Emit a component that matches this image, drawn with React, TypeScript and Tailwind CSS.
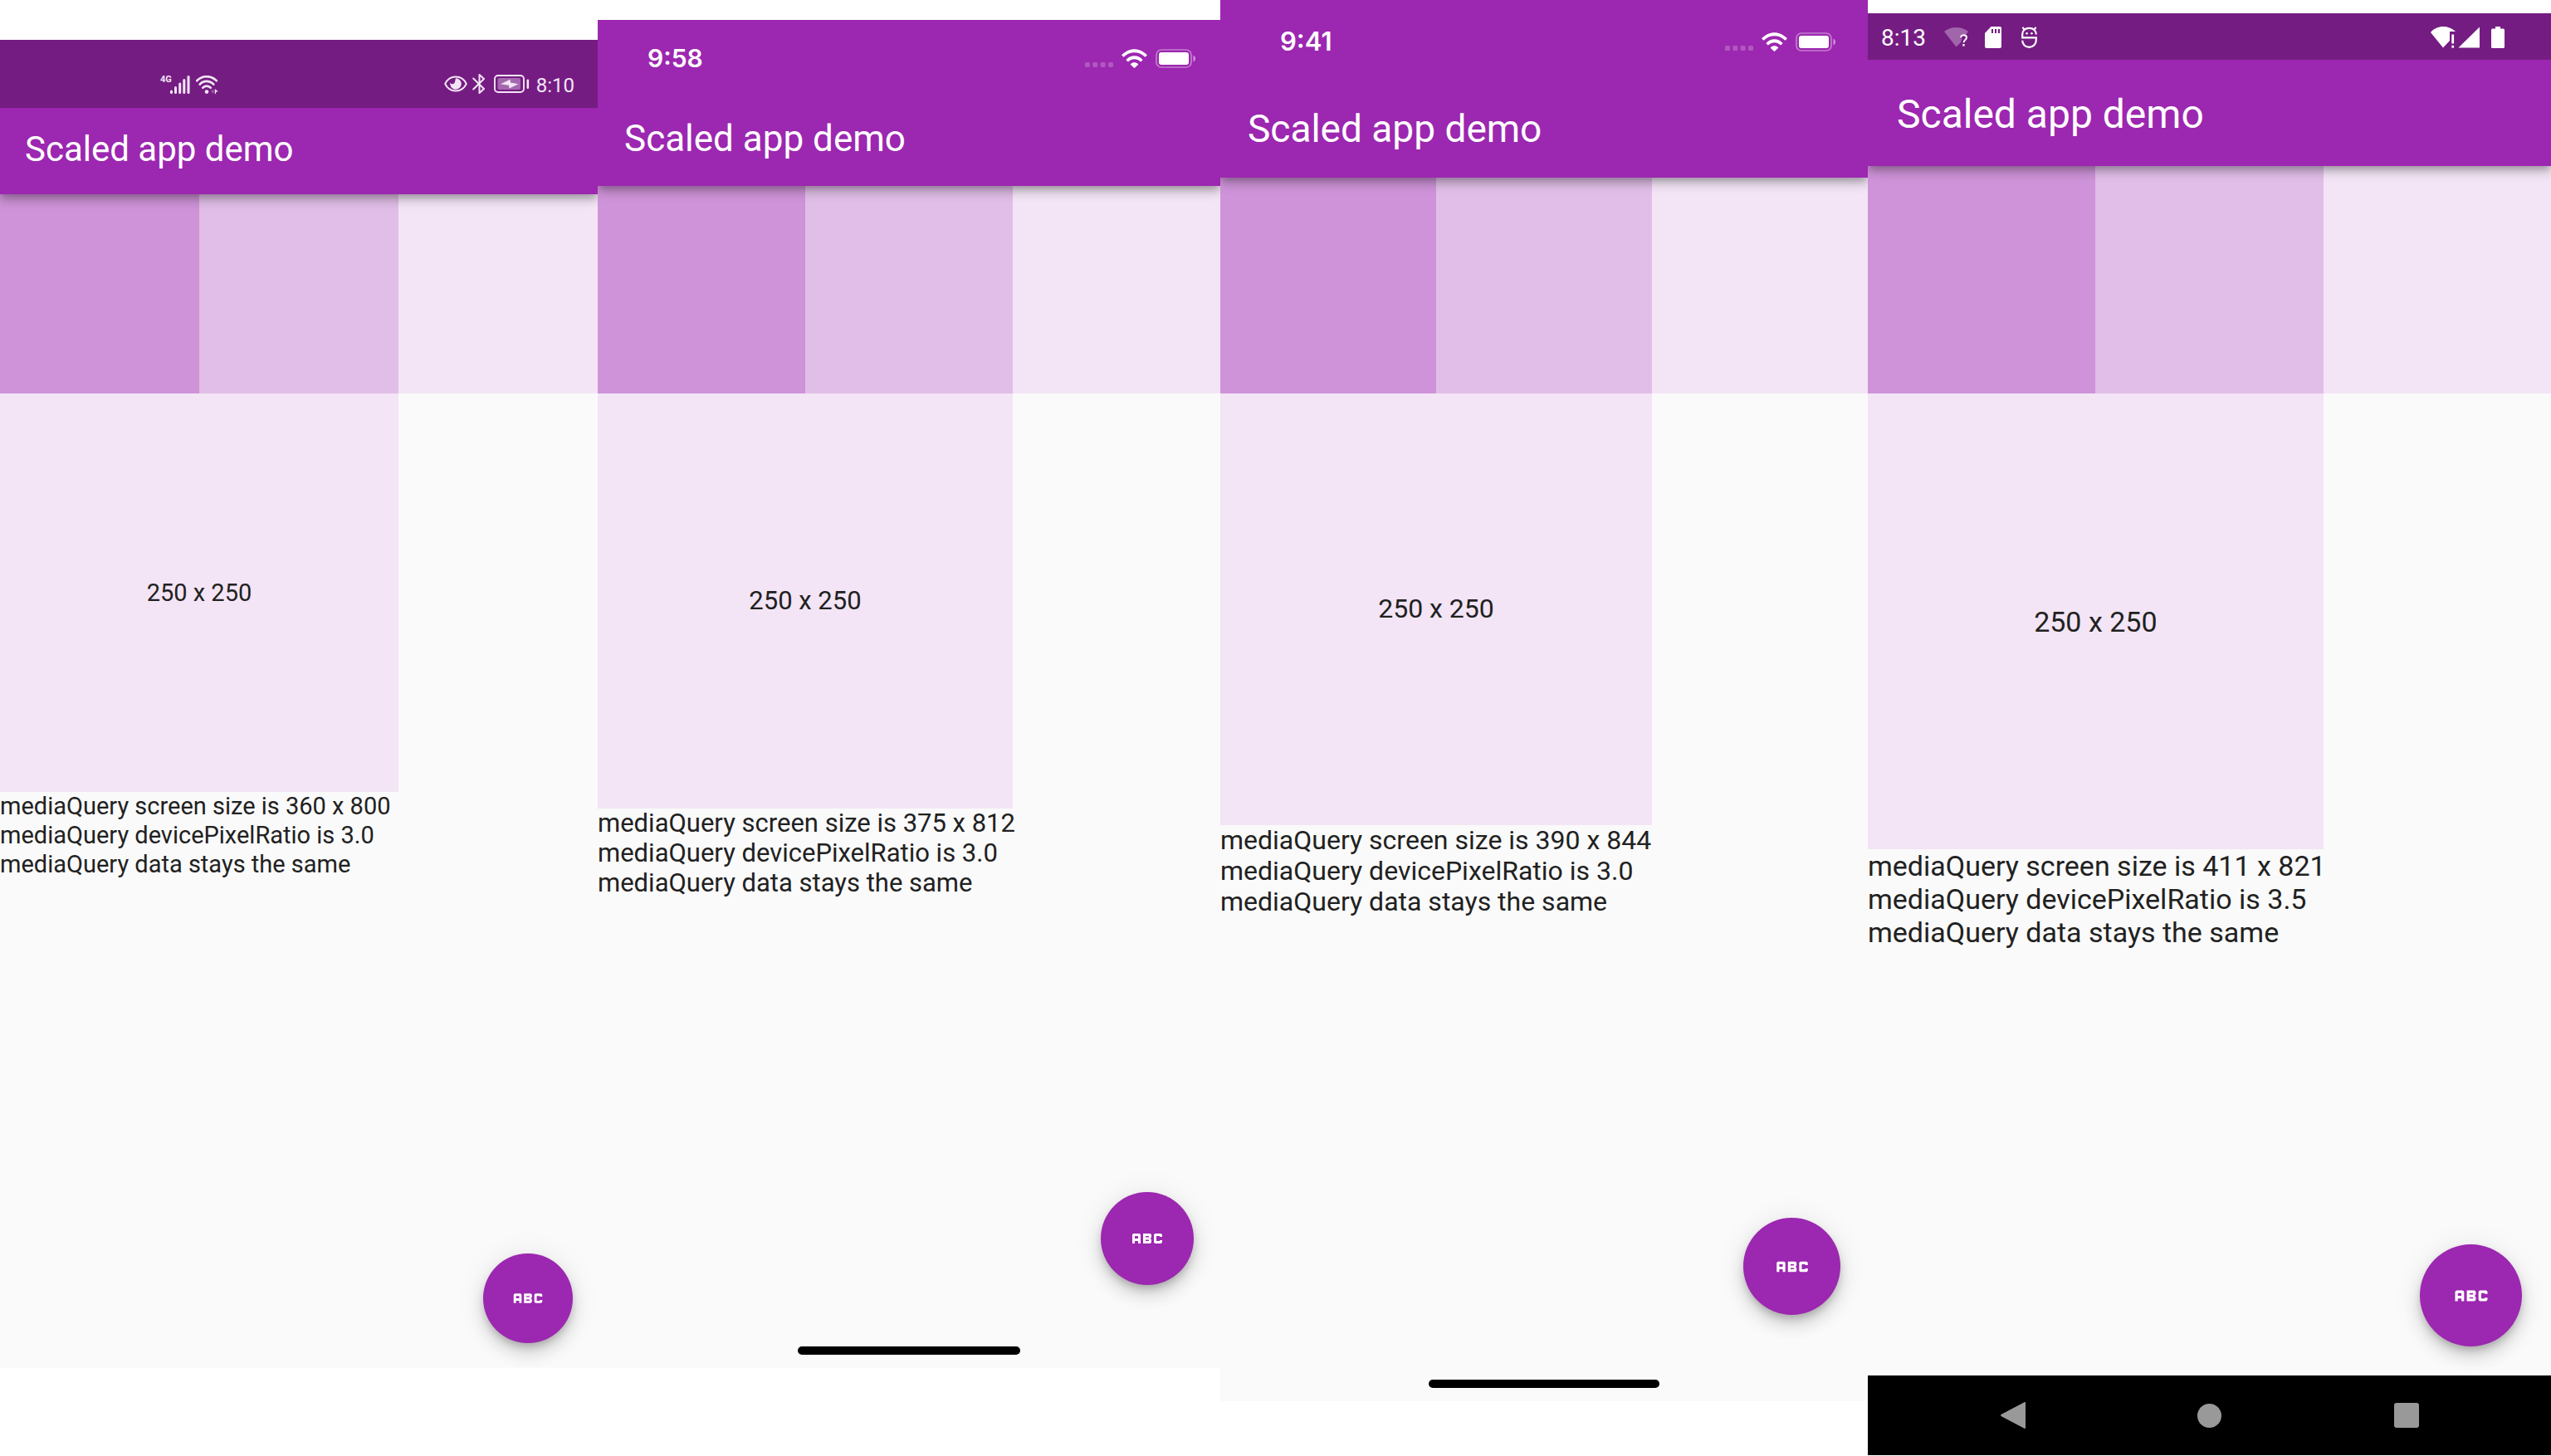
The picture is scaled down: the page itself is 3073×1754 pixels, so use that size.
import type { ReactNode } from 'react';
import { MdAbc } from 'react-icons/md';

function CellBars() {
  return (
    <svg viewBox="0 0 24 22" className="mt-px h-[22px] w-6" fill="currentColor" aria-hidden="true">
      <rect x="0" y="17.5" width="3" height="4.5" rx="1.5" />
      <rect x="5" y="13" width="3" height="9" rx="1.5" />
      <rect x="10.2" y="8.5" width="3" height="13.5" rx="1.5" />
      <rect x="15.3" y="4" width="3" height="18" rx="1.5" />
      <rect x="20.5" y="0" width="3" height="22" rx="1.5" />
    </svg>
  );
}

function WifiArcs() {
  return (
    <svg viewBox="0 0 27 22" className="mt-px h-[22px] w-[27px]" fill="none" aria-hidden="true">
      <g stroke="currentColor" strokeWidth="2.7" strokeLinecap="round">
        <path d="M1.3 6.2C7.5-.4 18.5-.4 24.7 6.2" />
        <path d="M4.7 10.6c4.5-4.9 12.1-4.9 16.6 0" />
        <path d="M8.3 14.7c2.6-2.9 6.8-2.9 9.4 0" />
      </g>
      <circle cx="13" cy="19.6" r="2.3" fill="currentColor" />
      <path d="M18 19.3l3.4-2.8v5.2z" fill="currentColor" opacity=".35" />
      <path d="M22.8 16l3.8 3.2-2.6.9V22h-1.2z" fill="currentColor" />
    </svg>
  );
}

function EyeIcon() {
  return (
    <svg viewBox="0 0 28 20" className="h-5 w-7" aria-hidden="true">
      <path d="M1.2 10C6.5-1.3 21.5-1.3 26.8 10 21.5 21.3 6.5 21.3 1.2 10Z" fill="none" stroke="currentColor" strokeWidth="1.9" />
      <path d="M14 3.2a6.800 6.800 0 1 1-6.600 5.200c1.200 2.200 3.600 2.300 4.800.9 1.400-1.600.9-3.800 1.800-6.100Z" fill="currentColor" />
      <path d="M14 3.200a6.800 6.800 0 0 1 0 13.600 6.800 6.800 0 0 0 0-13.600Z" fill="currentColor" />
    </svg>
  );
}

function BluetoothIcon() {
  return (
    <svg viewBox="0 0 16 24" className="h-6 w-4" fill="none" stroke="currentColor" strokeWidth="2" strokeLinejoin="round" strokeLinecap="round" aria-hidden="true">
      <path d="M1.2 5.500L14 18l-5.500 5V1L14 6 1.200 18.500" />
    </svg>
  );
}

function ChargingBattery() {
  return (
    <svg viewBox="0 0 43 22" className="h-[22px] w-[43px]" fill="none" aria-hidden="true">
      <rect x="1" y="1" width="35" height="20" rx="4" stroke="currentColor" strokeWidth="1.900" />
      <rect x="4.500" y="4" width="27.500" height="14" rx="2" fill="currentColor" opacity=".38" />
      <path d="M8 11.200L19.500 5.800l.5 3.600 9.500 1.800-11 5.400-.6-3.800z" fill="currentColor" />
      <rect x="39.500" y="5.500" width="2.600" height="11.500" rx="1.300" fill="currentColor" />
    </svg>
  );
}

function PhoneIndicators() {
  return (
    <div className="flex items-center gap-2.5 text-white">
      <svg viewBox="0 0 34 6" className="mt-4 h-1.5 w-[34px]" fill="currentColor" opacity=".22" aria-hidden="true">
        <rect x="0" width="6" height="6" rx="1.500" />
        <rect x="9.300" width="6" height="6" rx="1.500" />
        <rect x="18.600" width="6" height="6" rx="1.500" />
        <rect x="28" width="6" height="6" rx="1.500" />
      </svg>
      <svg viewBox="0 0 31 23" className="h-[23px] w-[31px]" aria-hidden="true">
        <path d="M.4 7.100C8.800-2.100 22.200-2.100 30.600 7.100c.2.200.2.500 0 .7L28.800 9.600c-.2.200-.5.200-.7 0-7-7.300-18.200-7.300-25.200 0-.2.200-.5.200-.7 0L.4 7.800c-.2-.2-.2-.5 0-.7Z" fill="currentColor" />
        <path d="M5.700 12.700c5.500-5.900 14.100-5.900 19.600 0 .2.200.2.500 0 .7l-1.900 1.900c-.2.200-.5.200-.7 0-4.100-4.100-10.300-4.100-14.400 0-.2.200-.5.200-.7 0l-1.900-1.900c-.2-.2-.2-.5 0-.7Z" fill="currentColor" />
        <path d="M11 18.300c2.500-2.600 6.500-2.600 9 0 .2.200.2.500 0 .7l-4.100 3.800c-.2.200-.6.200-.8 0L11 19c-.2-.2-.2-.5 0-.7Z" fill="currentColor" />
      </svg>
      <svg viewBox="0 0 49 23" className="h-[23px] w-[49px]" aria-hidden="true">
        <rect x="1" y="1" width="42" height="21" rx="6" fill="none" stroke="currentColor" strokeWidth="1.700" opacity=".4" />
        <rect x="4" y="4" width="36" height="15" rx="3" fill="currentColor" />
        <path d="M45.500 7.500c3.400 1.400 3.400 6.600 0 8z" fill="currentColor" opacity=".5" />
      </svg>
    </div>
  );
}

function UnknownWifi() {
  return (
    <svg viewBox="0 0 29 24" className="h-6 w-[29px]" aria-hidden="true">
      <path d="M0 5C8.500-1.600 20.500-1.600 29 5l-3 4c-3-1.800-7 .1-7 4.500h3l-1.500 2.500v1.500L14.500 23.500Z" fill="currentColor" opacity=".32" />
      <path d="M20 12.500c0-4.500 7-4.200 7-.2 0 2.600-3.500 2.700-3.500 6" fill="none" stroke="currentColor" strokeWidth="2" />
      <rect x="22.300" y="20" width="2.300" height="2.600" fill="currentColor" />
    </svg>
  );
}

function SdCard() {
  return (
    <svg viewBox="0 0 20 26" className="ml-5 h-[26px] w-5" aria-hidden="true">
      <path fillRule="evenodd" d="M7.500 0H18a2 2 0 0 1 2 2v22a2 2 0 0 1-2 2H2a2 2 0 0 1-2-2V8Zm.5 3v5h2V3Zm4 0v5h2V3Zm4 0v5h2V3Z" fill="currentColor" />
    </svg>
  );
}

function DebugMascot() {
  return (
    <svg viewBox="0 0 19 26" className="ml-6 h-[26px] w-[19px]" fill="none" stroke="currentColor" strokeWidth="2.200" aria-hidden="true">
      <path d="M1.500.8l2 2.800M17.500.8l-2 2.800" />
      <path d="M17.800 9.500C17.800 5 14.500 1.800 9.500 1.800S1.200 5 1.200 9.500v3.800h16.600v2.700c0 5.200-3.300 8.800-8.300 8.800S1.200 21.200 1.200 16.800" />
      <circle cx="6.600" cy="8.300" r="1.300" fill="currentColor" stroke="none" />
      <circle cx="12.400" cy="8.300" r="1.300" fill="currentColor" stroke="none" />
    </svg>
  );
}

function AndroidIndicators() {
  return (
    <div className="flex items-center">
      <svg viewBox="0 0 59 26" className="h-[26px] w-[59px]" fill="currentColor" aria-hidden="true">
        <path d="M0 7C8-2 21-2 30 6H23v11L15 25.500Z" />
        <rect x="25.300" y="9.500" width="2.800" height="11" />
        <rect x="25.300" y="22.800" width="2.800" height="2.800" />
        <path d="M59 .5V25.500H33.500Z" />
      </svg>
      <svg viewBox="0 0 16 26" className="ml-3.5 h-[26px] w-4" fill="currentColor" aria-hidden="true">
        <path d="M5 0h6v2.500h3.500A1.500 1.500 0 0 1 16 4v20.500a1.500 1.500 0 0 1-1.500 1.500h-13A1.500 1.500 0 0 1 0 24.500V4a1.500 1.500 0 0 1 1.500-1.500H5Z" />
      </svg>
    </div>
  );
}

function NavBar() {
  return (
    <nav className="mt-auto grid h-24 grid-cols-3 items-center px-14 text-[#999]">
      <button type="button" aria-label="Back" className="flex justify-center">
        <svg viewBox="0 0 30 32" className="h-8 w-[30px]" fill="currentColor" aria-hidden="true">
          <path d="M28.500.3c.9-.6 1.500 0 1.500 1v29.400c0 1-.6 1.600-1.500 1L1 17.200c-1.300-.8-1.300-1.600 0-2.400Z" />
        </svg>
      </button>
      <button type="button" aria-label="Home" className="flex justify-center">
        <span className="size-[29px] rounded-full bg-[#999]" />
      </button>
      <button type="button" aria-label="Recent apps" className="flex justify-center">
        <span className="size-[30px] rounded-[3px] bg-[#999]" />
      </button>
    </nav>
  );
}

type Device = {
  frame: string;
  status: ReactNode;
  appBar: string;
  body: string;
  fab: string;
  lines: string[];
  indicator?: string;
  nav?: boolean;
};

const devices: Device[] = [
  {
    frame: 'mt-12 aspect-[360/800]',
    status: (
      <div className="flex h-[82px] items-center justify-between bg-[#751c83] pt-6 pr-7 pl-[193px] text-[#f3e5f5]">
        <div className="flex items-start">
          <span className="h-[22px] w-3 font-[Roboto] text-[11px] leading-3 font-bold">4G</span>
          <CellBars />
          <span className="w-[7px]" />
          <WifiArcs />
        </div>
        <div className="flex items-center">
          <EyeIcon />
          <span className="w-1.5" />
          <BluetoothIcon />
          <span className="w-2.5" />
          <ChargingBattery />
          <time className="ml-2 pt-1 text-[24px] leading-6">8:10</time>
        </div>
      </div>
    ),
    appBar: 'h-[104px] pb-1.5 pl-[30px] text-[42px]',
    body: 'text-[29px] leading-[35px]',
    fab: 'right-[30px] bottom-[30px] size-[108px] text-[46px]',
    lines: ['mediaQuery screen size is 360 x 800', 'mediaQuery devicePixelRatio is 3.0'],
  },
  {
    frame: 'mt-6 aspect-[375/812]',
    status: (
      <div className="flex h-[92px] items-center justify-between bg-[#9c27b0] pr-[29px] pl-[60px]">
        <time className="font-[Inter] text-[30px] leading-9 font-semibold">9:58</time>
        <PhoneIndicators />
      </div>
    ),
    appBar: 'h-[108px] pb-1.5 pl-8 text-[44px]',
    body: 'text-[31px] leading-9',
    fab: 'right-8 bottom-[100px] size-28 text-[48px]',
    lines: ['mediaQuery screen size is 375 x 812', 'mediaQuery devicePixelRatio is 3.0'],
    indicator: 'bottom-4 w-[268px]',
  },
  {
    frame: 'aspect-[390/844]',
    status: (
      <div className="flex h-[100px] items-center justify-between bg-[#9c27b0] pr-[38px] pl-[72px]">
        <time className="font-[Inter] text-[31px] leading-9 font-semibold">9:41</time>
        <PhoneIndicators />
      </div>
    ),
    appBar: 'h-[114px] pb-1 pl-[33px] text-[46px]',
    body: 'text-[32px] leading-[37px]',
    fab: 'right-[33px] bottom-[104px] size-[117px] text-[50px]',
    lines: ['mediaQuery screen size is 390 x 844', 'mediaQuery devicePixelRatio is 3.0'],
    indicator: 'bottom-4 w-[278px]',
  },
  {
    frame: 'mt-4 aspect-[1440/3040]',
    status: (
      <div className="flex h-14 items-center justify-between bg-[#751c83] pt-0.5 pr-14 pl-4">
        <div className="flex items-center">
          <time className="mr-[22px] pt-0.5 text-[28px] leading-8">8:13</time>
          <UnknownWifi />
          <SdCard />
          <DebugMascot />
        </div>
        <AndroidIndicators />
      </div>
    ),
    appBar: 'h-32 pt-1 pl-[35px] text-[48px]',
    body: 'text-[34px] leading-10',
    fab: 'right-[35px] bottom-[131px] size-[123px] text-[52px]',
    lines: ['mediaQuery screen size is 411 x 821', 'mediaQuery devicePixelRatio is 3.5'],
    nav: true,
  },
];

function Phone({ device }: { device: Device }) {
  return (
    <section className={`relative flex flex-col overflow-hidden ${device.nav ? 'bg-black' : 'bg-[#fafafa]'} ${device.frame}`}>
      <header className="relative z-10 text-white shadow-[0_4px_8px_-2px_rgba(0,0,0,0.2),0_8px_10px_0_rgba(0,0,0,0.14),0_2px_20px_0_rgba(0,0,0,0.12)]">
        {device.status}
        <div className={`flex items-center bg-[#9c27b0] ${device.appBar}`}>
          <h1>Scaled app demo</h1>
        </div>
      </header>
      <main className={`flex-1 bg-[#fafafa] whitespace-nowrap text-[#212121] ${device.body}`}>
        <div className="grid grid-cols-3">
          <div className="aspect-square bg-[#ce93d8]" />
          <div className="aspect-square bg-[#e1bee7]" />
          <div className="aspect-square bg-[#f3e5f5]" />
        </div>
        <div className="flex aspect-square w-2/3 items-center justify-center bg-[#f3e5f5]">250 x 250</div>
        {device.lines.map((line) => (
          <p key={line}>{line}</p>
        ))}
        <p>mediaQuery data stays the same</p>
      </main>
      <button
        type="button"
        aria-label="ABC"
        className={`absolute flex items-center justify-center rounded-full bg-[#9c27b0] text-white shadow-[0_6px_10px_-2px_rgba(0,0,0,0.2),0_12px_20px_0_rgba(0,0,0,0.14),0_2px_36px_0_rgba(0,0,0,0.08)] ${device.fab}`}
      >
        <MdAbc />
      </button>
      {device.indicator && (
        <span className={`absolute left-1/2 h-2.5 -translate-x-1/2 rounded-full bg-black ${device.indicator}`} />
      )}
      {device.nav && <NavBar />}
    </section>
  );
}

export default function App() {
  return (
    <div className="grid min-h-screen grid-cols-[720fr_750fr_780fr_823fr] items-start bg-white font-[Roboto,sans-serif]">
      {devices.map((device) => (
        <Phone key={device.frame} device={device} />
      ))}
    </div>
  );
}
